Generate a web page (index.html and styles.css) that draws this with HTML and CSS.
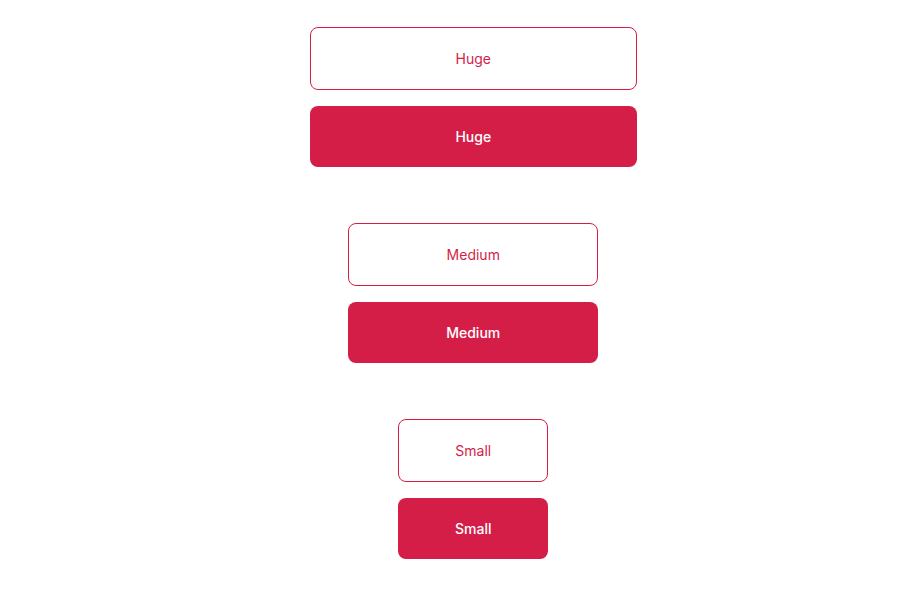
FILE: index.html
```html
<!DOCTYPE html>
<html>
<head>
<meta charset="utf-8">
<link rel="stylesheet" href="styles.css">
</head>
<body>
<main class="page">
  <section class="group">
    <button class="btn outline huge">Huge</button>
    <button class="btn solid huge">Huge</button>
  </section>
  <section class="group">
    <button class="btn outline medium">Medium</button>
    <button class="btn solid medium">Medium</button>
  </section>
  <section class="group">
    <button class="btn outline small">Small</button>
    <button class="btn solid small">Small</button>
  </section>
</main>
</body>
</html>
```
FILE: styles.css
```css
html, body {
  margin: 0;
  padding: 0;
  background: #ffffff;
}
.page {
  display: flex;
  flex-direction: column;
  align-items: center;
  gap: 56px;
  padding: 27px 0 0 25.5px;
  font-family: Inter, "Noto Sans", sans-serif;
}
.group {
  display: flex;
  flex-direction: column;
  align-items: center;
  gap: 16px;
}
.btn {
  box-sizing: border-box;
  display: flex;
  align-items: center;
  justify-content: center;
  font-family: Inter, "Noto Sans", sans-serif;
  font-size: 14px;
  border-radius: 8px;
  cursor: pointer;
  padding: 0;
}
.outline {
  height: 63px;
  background: #ffffff;
  border: 1px solid #d41e48;
  color: #d41e48;
  font-weight: 400;
}
.solid {
  height: 61px;
  background: #d41e48;
  border: none;
  color: #ffffff;
  font-weight: 500;
}
.huge { width: 327px; }
.medium { width: 250px; }
.small { width: 150px; }
```
